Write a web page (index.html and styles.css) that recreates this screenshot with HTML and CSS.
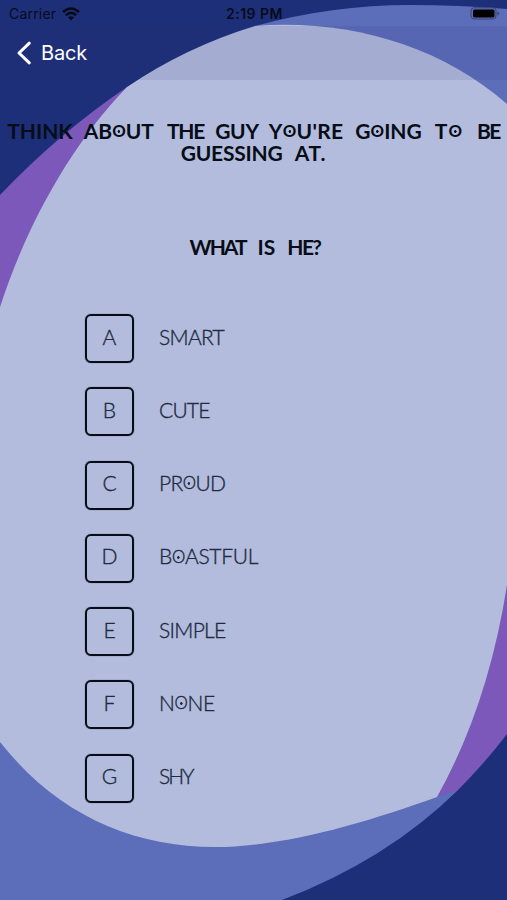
FILE: index.html
```html
<!DOCTYPE html>
<html lang="en">
<head>
<meta charset="utf-8">
<meta name="viewport" content="width=device-width, initial-scale=1">
<title>Quiz</title>
<link rel="stylesheet" href="styles.css">
</head>
<body>
<main class="screen">
  <svg class="backdrop" viewBox="0 0 507 900" aria-hidden="true">
    <path fill="#7b58b9" d="M0 195Q59 133 127 87L507 200V734Q485 763 458 790L420 822L0 900Z"/>
    <path fill="#5c6db9" d="M255 26Q332 5 410 5Q460 5 507 9V140Z"/>
    <path fill="#5c6db9" d="M0 700L437 797L458 790Q387 860 282 900H0Z"/>
    <path fill="#b3bcdc" d="M0 307C26 227 69 147 127 87Q186 47 255 26C346 19 438 44 507 104V585Q488 706 437 797C365 823 283 847 215 847C130 847 56 813 0 742Z"/>
  </svg>
  <header class="top">
    <div class="status">
      <div class="carrier"><span>Carrier</span>
        <svg class="wifi" viewBox="0 0 18 14"><g fill="none" stroke="#070b19" stroke-width="2.5"><path d="M1 5Q9-2 17 5M3.8 8.2Q9 3.5 14.2 8.2"/></g><path fill="#070b19" d="M6 10.3Q9 8 12 10.3L9 13.5Z"/></svg>
      </div>
      <time class="time">2:19 PM</time>
      <svg class="battery" viewBox="0 0 30 13"><rect x="1" y=".8" width="25" height="11.2" rx="3" fill="none" stroke="#39436f"/><rect x="3" y="2.4" width="21.5" height="8" rx="1.5" fill="#000"/><path fill="#39436f" d="M27.5 4.5Q31 6.3 27.5 8.4Z"/></svg>
    </div>
    <nav class="nav">
      <svg class="chevron" viewBox="0 0 16 24"><path d="M13.3 2.2L3 12L13.3 21.8" fill="none" stroke="#fff" stroke-width="3" stroke-linecap="round" stroke-linejoin="round"/></svg>
      <span>Back</span>
    </nav>
  </header>
  <h1 class="question">
    <span class="line"><span class="w">THINK</span><span class="w about">AB<i>O</i>UT</span><span class="w the">THE</span><span class="w guy">GUY</span><span class="w youre">Y<i>O</i>U'RE</span><span class="w">G<i>O</i>ING</span><span class="w to">T<i>O</i></span><span class="w be">BE</span></span>
    <span class="line"><span class="w guessing">GUESSING</span><span class="w at">AT.</span></span>
  </h1>
  <h2 class="prompt"><span class="w what">WHAT</span><span class="w">IS</span><span class="w he">HE?</span></h2>
  <ul class="options">
    <li><span class="key">A</span><span class="label smart">SMART</span></li>
    <li><span class="key">B</span><span class="label cute">CUTE</span></li>
    <li><span class="key">C</span><span class="label proud">PR<i>O</i>UD</span></li>
    <li><span class="key">D</span><span class="label boastful">B<i>O</i>ASTFUL</span></li>
    <li><span class="key">E</span><span class="label simple">SIMPLE</span></li>
    <li><span class="key">F</span><span class="label none">N<i>O</i>NE</span></li>
    <li><span class="key">G</span><span class="label shy">SHY</span></li>
  </ul>
</main>
</body>
</html>
```
FILE: styles.css
```css
* { box-sizing: border-box; }
body { margin: 0; background: #1d2f79; }
.screen {
  position: relative;
  width: 507px;
  height: 900px;
  overflow: hidden;
  background: #1d2f79;
  font-family: Lato, "Liberation Sans", sans-serif;
  color: #070d16;
}
.backdrop { position: absolute; inset: 0; width: 507px; height: 900px; }
.top { position: relative; height: 80px; font-family: Inter, Roboto, sans-serif; }
.status {
  height: 26px;
  display: grid;
  grid-template-columns: 1fr auto 1fr;
  align-items: center;
  padding: 1px 7px 0 9px;
  font-size: 14px;
  color: #070b19;
}
.carrier { display: flex; gap: 6px; align-items: center; letter-spacing: .2px; }
.wifi { width: 18px; height: 14px; }
.time { font-weight: 600; letter-spacing: .5px; }
.battery { width: 30px; height: 13px; justify-self: end; }
.nav {
  height: 54px;
  display: flex;
  align-items: center;
  gap: 9px;
  padding-left: 16px;
  background: rgba(35, 50, 115, .1);
  color: #fff;
  font-size: 20px;
  letter-spacing: -.2px;
}
.chevron { width: 16px; height: 24px; }
.question, .prompt { position: relative; margin: 0; font-size: 21px; font-weight: 700; line-height: 22px; }
.question { padding-top: 40px; height: 104px; }
.line { display: flex; justify-content: center; gap: 12px; white-space: nowrap; }
.w, .label { display: block; white-space: nowrap; }
.about { margin-left: -1px; }
.the { letter-spacing: -1.2px; margin-left: 1px; }
.guy { letter-spacing: -.3px; margin-left: -1px; }
.youre { letter-spacing: .3px; margin-left: -2px; }
.to { letter-spacing: 1px; margin-left: 1px; }
.be { letter-spacing: -1.5px; margin-left: 2px; }
.guessing { letter-spacing: -.2px; }
.at { letter-spacing: .8px; }
.prompt { display: flex; justify-content: center; gap: 12px; padding-top: 52px; height: 130px; }
.what { letter-spacing: -2px; margin-left: 3px; }
.he { letter-spacing: -1.6px; }
/* Small ring letter with a centre dot */
i {
  display: inline-block;
  font-style: normal;
  font-size: .8em;
  line-height: 1;
  vertical-align: .1em;
  background: radial-gradient(circle at 49% 50%, currentColor 1px, transparent 1.6px);
}
.options {
  position: relative;
  list-style: none;
  margin: 0;
  padding: 0 0 0 85px;
  display: grid;
  gap: 24.3px;
  font-size: 21px;
  font-weight: 400;
  color: #202a40;
}
.options li { display: flex; align-items: center; gap: 25px; height: 49px; }
.key {
  display: flex;
  align-items: center;
  justify-content: center;
  width: 49px;
  height: 49px;
  padding-bottom: 5px;
  border: 2px solid #070d16;
  border-radius: 6px;
  box-shadow: 0 0 .8px #070d16;
}
.key, .label { font-weight: 300; -webkit-text-stroke: .35px #202a40; }
.label { padding-bottom: 5px; }
.smart { letter-spacing: -.7px; }
.cute { letter-spacing: -.8px; }
.proud { letter-spacing: -.6px; }
.boastful { letter-spacing: -.3px; }
.simple { letter-spacing: -.7px; }
.none { letter-spacing: -.3px; }
.shy { letter-spacing: -2px; }
```
